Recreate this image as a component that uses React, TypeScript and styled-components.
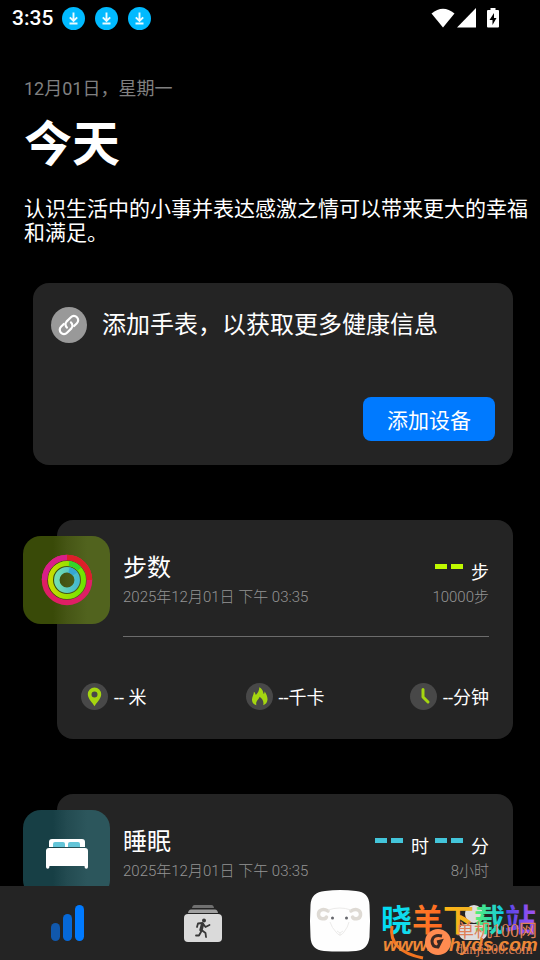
import React from "react";
import styled, { createGlobalStyle } from "styled-components";

const GlobalStyle = createGlobalStyle`
  * { box-sizing: border-box; }
  body {
    margin: 0;
    background: #000;
    color: #fff;
    font-family: Roboto, "Noto Sans CJK SC", sans-serif;
  }
  h1, h2, p { margin: 0; font-weight: 400; }
`;

const Screen = styled.div`
  display: flex;
  flex-direction: column;
  height: 100vh;
  overflow: hidden;
`;

const StatusBar = styled.header`
  flex: none;
  display: flex;
  align-items: center;
  justify-content: space-between;
  height: 36px;
  padding: 0 41px 0 12px;
`;

const StatusGroup = styled.div<{ $gap: number }>`
  display: flex;
  align-items: center;
  gap: ${(p) => p.$gap}px;
`;

const Clock = styled.time`
  font-size: 21px;
  font-weight: 500;
  line-height: 38px;
  margin-right: -1px;
`;

const Content = styled.main`
  flex: 1;
  min-height: 0;
  overflow-y: auto;
  scrollbar-width: none;
`;

const Intro = styled.section`
  padding: 40px 10px 0 24px;
`;

const Today = styled.p`
  color: #808080;
  font-size: 18px;
  line-height: 26px;
`;

const Title = styled.h1`
  && { font-weight: 700; }
  font-size: 48px;
  line-height: 86px;
`;

const Quote = styled.p`
  margin-top: 9px;
  font-size: 21px;
  line-height: 24px;
`;

const Card = styled.section`
  background: #242424;
  border-radius: 16px;
`;

const DeviceCard = styled(Card)`
  display: flex;
  flex-direction: column;
  justify-content: space-between;
  min-height: 182px;
  margin: 38px 27px 0 33px;
  padding: 24px 18px;
`;

const DeviceHeading = styled.div`
  display: flex;
  align-items: center;
  gap: 15px;
`;

const DeviceTitle = styled.h2`
  font-size: 24px;
  line-height: 36px;
`;

const AddButton = styled.button`
  align-self: flex-end;
  width: 132px;
  height: 44px;
  padding: 0;
  border: 0;
  border-radius: 8px;
  background: #007aff;
  color: #fff;
  font: inherit;
  font-size: 21px;
`;

const MetricCard = styled(Card)`
  min-height: 219px;
  margin: 55px 27px 0 57px;
  padding: 16px 24px 0 0;
`;

const MetricTop = styled.div`
  display: flex;
  gap: 13px;
  margin-left: -34px;
`;

const Tile = styled.div<{ $from: string; $mid: string; $to: string }>`
  flex: none;
  display: grid;
  place-items: center;
  width: 87px;
  height: 88px;
  border-radius: 18px;
  background: linear-gradient(
    90deg,
    ${(p) => p.$from} 0,
    ${(p) => p.$from} 30px,
    ${(p) => p.$mid} 44px,
    ${(p) => p.$to} 64px
  );
`;

const MetricText = styled.div`
  flex: 1;
  display: flex;
  justify-content: space-between;
  height: 101px;
  padding-top: 14px;
  border-bottom: 1px solid #6c6c6c;
  white-space: nowrap;
`;

const Side = styled.div<{ $align: "left" | "right" }>`
  text-align: ${(p) => p.$align};
`;

const MetricName = styled.h2`
  font-size: 24px;
  line-height: 36px;
`;

const Muted = styled.p`
  color: #949494;
  font-size: 15px;
  font-weight: 300;
  line-height: 22px;
`;

const Reading = styled.div`
  display: flex;
  justify-content: flex-end;
  height: 36px;
`;

const Dashes = styled.svg`
  width: 28px;
  height: 34px;
`;

const Unit = styled.span`
  margin: 0 6px 0 8px;
  font-size: 18px;
  line-height: 46px;

  &:last-child { margin-right: 0; }
`;

const Stats = styled.div`
  display: grid;
  grid-template-columns: 1fr auto 1fr;
  margin: 44px 0 0 24px;
`;

const Stat = styled.div`
  display: flex;
  align-items: center;
  gap: 6px;
  font-size: 18px;
  line-height: 28px;

  &:last-child { justify-self: end; }
`;

const StatText = styled.span`
  padding-top: 3px;
`;

const Nav = styled.nav`
  position: relative;
  flex: none;
  display: grid;
  grid-template-columns: repeat(4, 1fr);
  height: 74px;
  background: #242424;
`;

const NavButton = styled.button`
  display: grid;
  place-items: center;
  padding: 0;
  border: 0;
  background: none;
`;

const Watermark = styled.a`
  position: absolute;
  right: 0;
  bottom: 0;
  width: 164px;
  height: 64px;
  text-decoration: none;
`;

const Art = styled.svg`
  display: block;
  overflow: visible;
`;

function DownloadIcon() {
  return (
    <Art width="23" height="23" viewBox="0 0 23 23">
      <circle cx="11.5" cy="11.5" r="11.5" fill="#00baff" />
      <path d="M11.5 5.5v8M7.8 10.3l3.7 3.7 3.7-3.7M7.5 16.5h8" fill="none" stroke="#e8faff" strokeWidth="1.9" />
    </Art>
  );
}

function WifiIcon() {
  return (
    <Art width="24" height="20" viewBox="0 0 24 20">
      <path d="M0.5 5.5Q12-4 23.5 5.5L12 19.5Z" fill="#fff" />
    </Art>
  );
}

function SignalIcon() {
  return (
    <Art width="19" height="20" viewBox="0 0 19 20">
      <path d="M19 0V19.5H0Z" fill="#fff" />
    </Art>
  );
}

function BatteryIcon() {
  return (
    <Art width="12" height="20" viewBox="0 0 12 20">
      <path d="M3.5 0h5v2H11a1 1 0 0 1 1 1v15.5a1 1 0 0 1-1 1H1a1 1 0 0 1-1-1V3a1 1 0 0 1 1-1h2.5z" fill="#fff" />
      <path d="M7 5L2.500 12H5.500V17L9.500 10H7Z" fill="#000" />
    </Art>
  );
}

function LinkIcon() {
  return (
    <Art width="36" height="36" viewBox="0 0 36 36">
      <circle cx="18" cy="18" r="18" fill="#999" />
      <g fill="none" stroke="#fff" strokeWidth="2.200" strokeLinecap="round">
        <path d="M16 20.600a4.200 4.200 0 0 1-.5-6l4.400-4.400a4.200 4.200 0 0 1 6 0a4.200 4.200 0 0 1 0 6l-2.800 2.800" />
        <path d="M19.900 15.400a4.200 4.200 0 0 1 .5 6l-4.400 4.400a4.200 4.200 0 0 1-6 0a4.200 4.200 0 0 1 0-6l2.800-2.800" />
      </g>
    </Art>
  );
}

function RingsIcon() {
  return (
    <Art width="52" height="52" viewBox="0 0 52 52">
      <defs>
        <linearGradient id="green" x1="0" x2="1">
          <stop stopColor="#c6dc00" />
          <stop offset="1" stopColor="#6ee500" />
        </linearGradient>
        <linearGradient id="aqua" x1="0" x2="1">
          <stop stopColor="#72ddb0" />
          <stop offset="1" stopColor="#46b9cf" />
        </linearGradient>
      </defs>
      <g fill="none">
        <circle cx="26" cy="26" r="22.500" stroke="#df1e65" strokeWidth="5.500" />
        <path d="M26 3.500A22.500 22.500 0 0 1 48.500 26" stroke="#dc2028" strokeWidth="5.500" />
        <path d="M3.500 26A22.500 22.500 0 0 1 26 3.500" stroke="#d81f89" strokeWidth="5.500" />
        <circle cx="26" cy="26" r="16.500" stroke="url(#green)" strokeWidth="5" />
        <path d="M28 9.600a16.500 16.500 0 0 1 10.500 5.500" stroke="#35d52a" strokeWidth="5" />
        <circle cx="26" cy="26" r="10.200" stroke="url(#aqua)" strokeWidth="5.500" />
        <path d="M28 16a10.200 10.200 0 0 1 6 4" stroke="#36a6d5" strokeWidth="5.500" />
      </g>
    </Art>
  );
}

function BedIcon() {
  return (
    <Art width="42" height="30" viewBox="0 0 42 30">
      <path d="M3 8V3a3 3 0 0 1 3-3h30a3 3 0 0 1 3 3v5z" fill="#fff" />
      <path d="M7 8V5a2 2 0 0 1 2-2h8a2 2 0 0 1 2 2v3zM22 8V5a2 2 0 0 1 2-2h8a2 2 0 0 1 2 2v3z" fill="#63c5d8" />
      <path d="M0 12a3 3 0 0 1 3-3h36a3 3 0 0 1 3 3v16a1.700 1.700 0 0 1-3.400 0v-1H3.400v1a1.700 1.700 0 0 1-3.400 0z" fill="#fff" />
    </Art>
  );
}

const statShapes = {
  pin: <path fillRule="evenodd" d="M13.500 4.500a6.700 6.700 0 0 0-6.700 6.800c0 4.600 5 8.600 6.700 12c1.700-3.400 6.700-7.400 6.700-12a6.700 6.700 0 0 0-6.700-6.800zm0 4a3 3 0 1 1 0 6 3 3 0 0 1 0-6z" fill="#a5d610" />,
  fire: <path d="M13.300 4.300c4 2.200 3.700 5 4.400 6.700c.8-.7 1-1.800.8-2.800c2 3 3.200 5.700 3 8.600c-.2 2.700-1.700 4.500-4.300 5.500c.8-3.600-.3-6-3.600-8.600c-.8 3.300-4.300 4-3.200 8.600c-2.800-1-4.300-2.600-4.400-5.300c-.2-2.900 1.800-4.800 1.900-8.200c1.200.9 1.700 2 1.900 3.200c2.400-2 3.400-4.500 3.500-7.700z" fill="#a5d610" />,
  clock: <path d="M13 6.500v7.500l5 5" fill="none" stroke="#a5d610" strokeWidth="3" strokeLinecap="round" strokeLinejoin="round" />,
};

function StatIcon({ kind }: { kind: keyof typeof statShapes }) {
  return (
    <Art width="27" height="27" viewBox="0 0 27 27">
      <circle cx="13.500" cy="13.500" r="13.500" fill="#484848" />
      {statShapes[kind]}
    </Art>
  );
}

function BarsIcon() {
  return (
    <Art width="33" height="36" viewBox="0 0 33 36">
      <rect y="18" width="9" height="18" rx="4.500" fill="#1158ac" />
      <rect x="12" y="9" width="9" height="27" rx="4.500" fill="#0668d7" />
      <rect x="24" width="9" height="36" rx="4.500" fill="#007aff" />
    </Art>
  );
}

function WorkoutIcon() {
  return (
    <Art width="38" height="37" viewBox="0 0 38 37">
      <path d="M8 3Q8.500 0 10.500 0h17q2 0 2.500 3z" fill="#707070" />
      <path d="M4 8Q4.500 4.500 7 4.500h24q2.500 0 3 3.500z" fill="#a0a0a0" />
      <rect y="9" width="38" height="28" rx="4" fill="#dadada" />
      <circle cx="20" cy="15.500" r="2" fill="#383838" />
      <g fill="none" stroke="#383838" strokeWidth="1.800" strokeLinecap="round" strokeLinejoin="round">
        <path d="M13 22l1-3.500 4.500-.5 3 4 4-2M12 30.500h3l2.500-4.500M22 32l-.5-4-4-3" />
        <path d="M18.500 19.500l-1.500 5.500" strokeWidth="3.400" />
      </g>
    </Art>
  );
}

function RamIcon() {
  return (
    <Art width="64" height="66" viewBox="-4 0 64 66">
      <path d="M15 1Q30-1 46 1Q59 2 59.500 15Q60.500 30 59.500 47Q58 60 46 61Q30 62 14 61Q1 60 .5 47Q-.5 30 .5 15Q1 2 15 1z" fill="#fefefe" />
      <g fill="none" stroke="#dedad4" strokeWidth="3.500" strokeLinecap="round">
        <path d="M18 21c-5-3-10-1-9.500 4s7 4.500 8 2M41 21c5-3 10-1 9.500 4s-7 4.500-8 2" />
      </g>
      <path d="M18 20q12-4 23 0M20 32q2 6 6 10q4 6 8 0q4-5 5-10M27 41l3 2 3-2M30 43v3" fill="none" stroke="#ecebea" strokeWidth="1" />
      <circle cx="22.500" cy="28" r="1.500" fill="#66676d" />
      <circle cx="36.500" cy="28" r="1.500" fill="#66676d" />
    </Art>
  );
}

function ProfileIcon() {
  return (
    <Art width="28" height="37" viewBox="0 0 28 37">
      <circle cx="15" cy="9" r="9" fill="#ddd" />
      <rect y="19" width="28" height="16" rx="7" fill="#ddd" />
    </Art>
  );
}

function WatermarkArt() {
  return (
    <Art width="164" height="64" viewBox="0 0 164 64">
      <defs>
        <linearGradient id="brand" gradientUnits="userSpaceOnUse" x1="5" x2="162" y1="0" y2="0">
          <stop stopColor="#00dcf5" />
          <stop offset=".18" stopColor="#12dcec" />
          <stop offset=".2" stopColor="#ff7a28" />
          <stop offset=".39" stopColor="#ff6a20" />
          <stop offset=".4" stopColor="#ffb414" />
          <stop offset=".58" stopColor="#efb325" />
          <stop offset=".6" stopColor="#55ee70" />
          <stop offset=".78" stopColor="#10c9e8" />
          <stop offset=".8" stopColor="#5545e8" />
          <stop offset="1" stopColor="#a754f5" />
        </linearGradient>
      </defs>
      <text x="5" y="35" fontSize="31" fontWeight="700" fontFamily='"Noto Sans CJK SC", sans-serif' fill="url(#brand)">晓羊下载站</text>
      <path d="M16 30Q12 55 47 62" fill="none" stroke="#f37420" strokeWidth="3" />
      <g fontFamily='"Liberation Sans", sans-serif' fontSize="19" fontWeight="700" fontStyle="italic" fill="#ef8835">
        <text x="7" y="55">www.</text>
        <text x="73" y="55">hyds.com</text>
      </g>
      <g fontFamily='"Liberation Serif", "Noto Sans CJK SC", serif' fill="#df8058">
        <text x="80" y="41" fontSize="18">单机100网</text>
        <text x="80" y="58" fontSize="14">danji100.com</text>
      </g>
      <circle cx="62" cy="46" r="13" fill="#ff8b50" />
      <path d="M66 40q-9-2-10 5q0 6 6 6l3-6-4 1" fill="none" stroke="#3a2923" strokeWidth="3" />
    </Art>
  );
}

function DoubleDash({ color }: { color: string }) {
  return (
    <Dashes viewBox="0 0 28 34" role="img" aria-label="--">
      <path d="M0 14h12v5H0zM16 14h12v5H16z" fill={color} />
    </Dashes>
  );
}

interface MetricProps {
  name: string;
  icon: React.ReactNode;
  tile: [string, string, string];
  color: string;
  units: string[];
  goal: string;
  children?: React.ReactNode;
}

function Metric({ name, icon, tile, color, units, goal, children }: MetricProps) {
  return (
    <MetricCard>
      <MetricTop>
        <Tile $from={tile[0]} $mid={tile[1]} $to={tile[2]}>{icon}</Tile>
        <MetricText>
          <Side $align="left">
            <MetricName>{name}</MetricName>
            <Muted>2025年12月01日 下午 03:35</Muted>
          </Side>
          <Side $align="right">
            <Reading>
              {units.map((unit) => (
                <React.Fragment key={unit}>
                  <DoubleDash color={color} />
                  <Unit>{unit}</Unit>
                </React.Fragment>
              ))}
            </Reading>
            <Muted>{goal}</Muted>
          </Side>
        </MetricText>
      </MetricTop>
      {children}
    </MetricCard>
  );
}

export default function App() {
  return (
    <>
      <GlobalStyle />
      <Screen>
        <StatusBar>
          <StatusGroup $gap={10}>
            <Clock>3:35</Clock>
            <DownloadIcon />
            <DownloadIcon />
            <DownloadIcon />
          </StatusGroup>
          <StatusGroup $gap={2}>
            <WifiIcon />
            <StatusGroup $gap={11}>
              <SignalIcon />
              <BatteryIcon />
            </StatusGroup>
          </StatusGroup>
        </StatusBar>
        <Content>
          <Intro>
            <Today>12月01日，星期一</Today>
            <Title>今天</Title>
            <Quote>认识生活中的小事并表达感激之情可以带来更大的幸福和满足。</Quote>
          </Intro>
          <DeviceCard>
            <DeviceHeading>
              <LinkIcon />
              <DeviceTitle>添加手表，以获取更多健康信息</DeviceTitle>
            </DeviceHeading>
            <AddButton type="button">添加设备</AddButton>
          </DeviceCard>
          <Metric
            name="步数"
            icon={<RingsIcon />}
            tile={["#394a08", "#465615", "#51631e"]}
            color="#c0fa00"
            units={["步"]}
            goal="10000步"
          >
            <Stats>
              <Stat><StatIcon kind="pin" /><StatText>-- 米</StatText></Stat>
              <Stat><StatIcon kind="fire" /><StatText>--千卡</StatText></Stat>
              <Stat><StatIcon kind="clock" /><StatText>--分钟</StatText></Stat>
            </Stats>
          </Metric>
          <Metric
            name="睡眠"
            icon={<BedIcon />}
            tile={["#173f45", "#234b51", "#2c565c"]}
            color="#43c5da"
            units={["时", "分"]}
            goal="8小时"
          />
        </Content>
        <Nav>
          <NavButton type="button" aria-label="今天"><BarsIcon /></NavButton>
          <NavButton type="button" aria-label="运动"><WorkoutIcon /></NavButton>
          <NavButton type="button" aria-label="晓羊"><RamIcon /></NavButton>
          <NavButton type="button" aria-label="我的"><ProfileIcon /></NavButton>
          <Watermark href="#" aria-label="晓羊下载站"><WatermarkArt /></Watermark>
        </Nav>
      </Screen>
    </>
  );
}
